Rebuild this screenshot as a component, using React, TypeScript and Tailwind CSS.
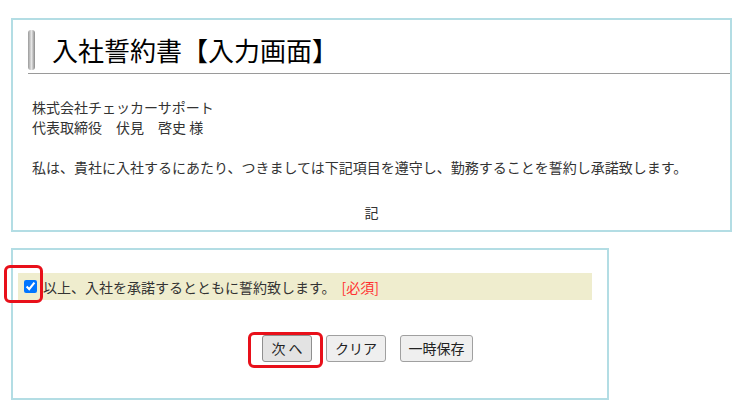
export default function App() {
  return (
    <div
      className="relative w-[747px] h-[417px] bg-white text-[#333] overflow-hidden"
      style={{ fontFamily: '"Noto Sans CJK JP", "Noto Sans", sans-serif' }}
    >
      <div className="pt-[18px] pl-[11px]">
        {/* upper panel */}
        <div className="w-[721px] h-[214px] border-2 border-[#b3dde4]">
          <div className="ml-[15px] mt-[10px] flex items-center pb-[3px] border-b border-[#9a9a9a]">
            <div className="w-[7px] h-[40px] rounded-[3px] bg-gradient-to-r from-[#9a9a9a] via-[#e6e6e6] to-[#8a8a8a]" />
            <h1 className="ml-[17px] text-[26px] leading-[40px] text-black font-normal">
              入社誓約書【入力画面】
            </h1>
          </div>
          <div className="pl-[19px] text-[14px] leading-[20px]">
            <p className="mt-[23px]">
              株式会社チェッカーサポート
              <br />
              代表取締役　伏見　啓史 様
            </p>
            <p className="mt-[20px]">
              私は、貴社に入社するにあたり、つきましては下記項目を遵守し、勤務することを誓約し承諾致します。
            </p>
          </div>
          <p className="mt-[25px] text-center text-[14px] leading-[20px]">記</p>
        </div>

        {/* lower panel */}
        <div className="mt-[16px] w-[598px] h-[152px] border-2 border-[#b3dde4]">
          <div className="mt-[23px] ml-[5px] mr-[15px] h-[27px] bg-[#efedce] flex items-center pl-[6px]">
            <input
              type="checkbox"
              defaultChecked
              className="w-[13px] h-[13px] m-0 accent-[#0075ff]"
            />
            <span className="ml-[6px] text-[14px] leading-[20px]">
              以上、入社を承諾するとともに誓約致します。
            </span>
            <span className="ml-[6px] text-[14px] leading-[20px] text-[#ff3030]">[必須]</span>
          </div>
          <div className="mt-[35px] ml-[249px] flex gap-[14px] text-[14px] text-[#222]">
            <button className="w-[50px] h-[27px] rounded-[3px] border border-[#8f8f8f] bg-[#e3e3e3]">
              次 へ
            </button>
            <button className="w-[60px] h-[27px] rounded-[3px] border border-[#a0a0a0] bg-[#efefef]">
              クリア
            </button>
            <button className="w-[73px] h-[27px] rounded-[3px] border border-[#a0a0a0] bg-[#efefef]">
              一時保存
            </button>
          </div>
        </div>
      </div>

      {/* red highlight marks */}
      <div className="absolute left-[4px] top-[265px] w-[39px] h-[38px] rounded-[6px] border-[3px] border-[#e8101a]" />
      <div className="absolute left-[248px] top-[332px] w-[75px] h-[36px] rounded-[6px] border-[3px] border-[#e8101a]" />
    </div>
  )
}
